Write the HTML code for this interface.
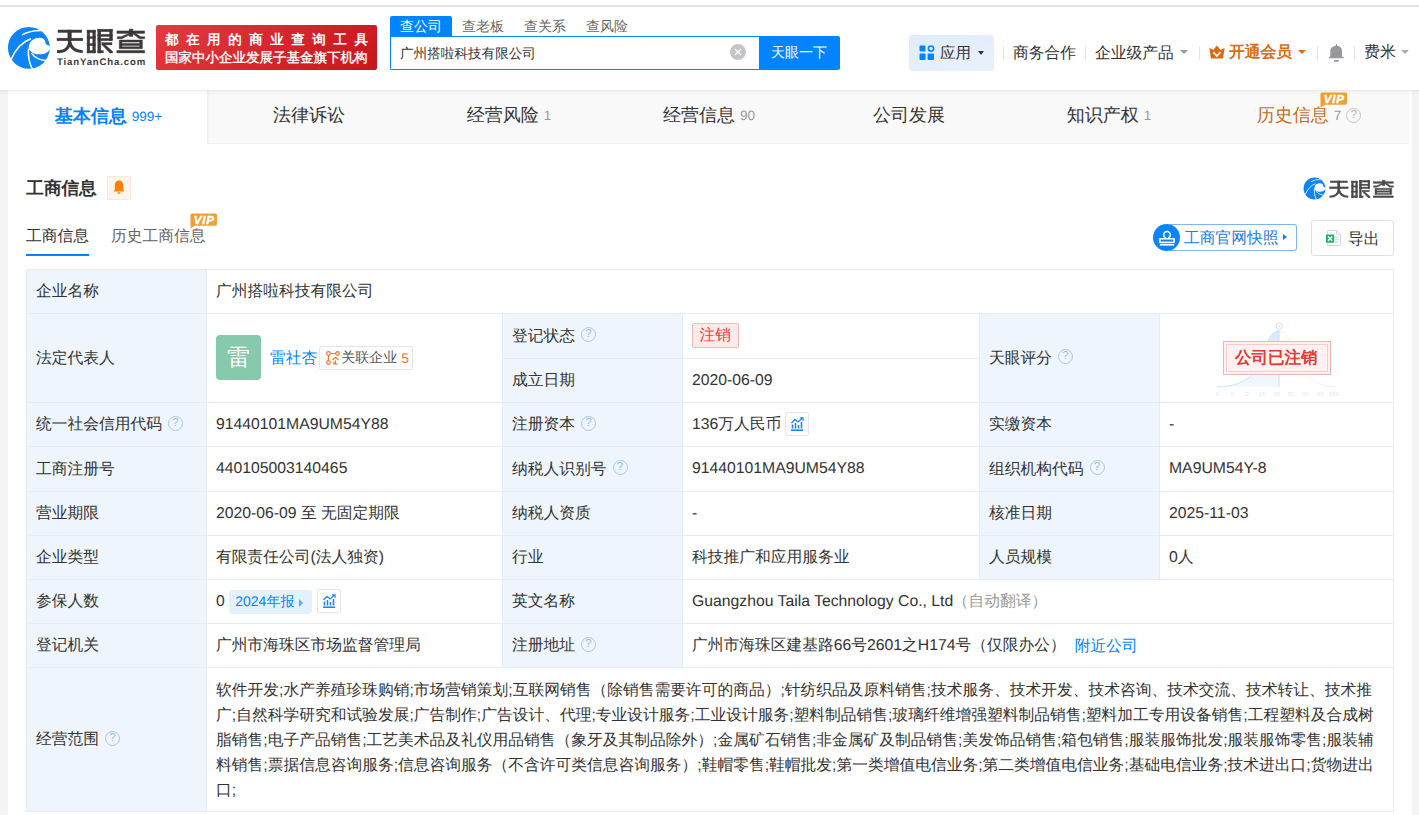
<!DOCTYPE html>
<html><head><meta charset="utf-8">
<style>
*{box-sizing:border-box;margin:0;padding:0}
html,body{width:1419px;height:815px;overflow:hidden}
body{text-rendering:geometricPrecision;background:#f4f4f4;font-family:"Liberation Sans",sans-serif;color:#333;position:relative}
.abs{position:absolute}
#topline{left:0;top:0;width:1419px;height:5px;background:#fff}
#topline2{left:0;top:5px;width:1419px;height:2px;background:#e2e2e2}
#header{left:0;top:7px;width:1419px;height:83px;background:#fff}
.nowrap{white-space:nowrap}
/* card */
#card{left:8px;top:90px;width:1404px;height:725px;background:#fff}
#tabbar{left:8px;top:90px;width:1401px;height:54px;background:#f9f9f9;border-bottom:1px solid #f1f1f1}
.tab{position:absolute;top:0;height:53px;width:200px;display:flex;justify-content:center;align-items:center;padding-bottom:1px;padding-left:2px;font-size:18px;color:#333;white-space:nowrap}
.tab .n{font-size:13.5px;color:#999;margin-left:5px;margin-bottom:1px}
#tab0{left:0;background:#fff;color:#0084ff;font-weight:bold;height:54px;width:199px}
#tab0 .n{color:#0084ff;font-weight:normal}
/* table */
.cell{position:absolute;font-weight:500;font-size:15.75px;white-space:nowrap;display:flex;align-items:center;padding-left:9px;color:#333}
.lab{background:#eef5fc}
.hl{position:absolute;height:1px;background:#e5ecf4}
.vl{position:absolute;width:1px;background:#e5ecf4}
.q{display:inline-block;width:15px;height:15px;border:1.2px solid #abc7e6;border-radius:50%;color:#9dbbe0;font-size:11.5px;font-weight:normal;line-height:13px;text-align:center;margin-left:6px;position:relative;top:-1.5px;font-family:"Liberation Sans",sans-serif}
.avatar{margin-left:-1px;position:relative;top:-1px;display:inline-block;width:45px;height:45px;border-radius:4px;background:#86c9ac;color:#fff;font-size:23px;line-height:44px;text-align:center;flex:none}
.rel{display:inline-flex;align-items:center;height:24px;border:1px solid #e3e6eb;border-radius:2px;padding:0 3px 0 6px;margin-left:2px;font-size:14px;color:#555}
.tagred{position:relative;top:-1px;display:inline-block;height:25px;line-height:23px;padding:0 6.5px;border:1px solid #f6b9b9;background:#feeaea;color:#e8413a;border-radius:2px;font-size:15.75px}
.chartbtn{position:relative;top:-1px;display:inline-flex;align-items:center;justify-content:center;width:24px;height:24px;border:1px solid #e3e8ef;border-radius:2px;margin-left:4px}
.nb{display:inline-flex;align-items:center;height:24px;padding:2px 8.5px 0 6.5px;background:#e3f1fd;color:#0084ff;border-radius:3px;font-size:14px;margin-left:4px}
.tri{display:inline-block;width:0;height:0;border-top:4px solid transparent;border-bottom:4px solid transparent;border-left:4px solid #5aaaf5;margin-left:5px}
.scope{font-weight:500;width:1185px;padding:10.3px 10px 0 9px;font-size:15.75px;line-height:25px;color:#333}
.sl{white-space:nowrap}
</style></head>
<body>
<div class="abs" id="topline"></div>
<div class="abs" id="topline2"></div>
<div class="abs" id="header"></div>

<!-- logo -->
<svg class="abs" style="left:5px;top:24px" width="50" height="48" viewBox="0 0 849 815">
  <circle cx="405" cy="405" r="355" fill="#0f84f5"/>
  <path d="M400 420 C400 300 480 238 580 235 C650 235 690 270 690 340 L780 385 C750 480 680 520 560 515 C480 510 440 470 400 420 Z" fill="#fff"/>
  <path d="M290 185 Q420 110 610 110" stroke="#fff" stroke-width="24" fill="none"/>
  <path d="M105 600 Q220 330 440 250" stroke="#fff" stroke-width="26" fill="none"/>
  <path d="M398 420 Q385 620 470 780" stroke="#fff" stroke-width="26" fill="none"/>
  <path d="M450 495 Q530 610 700 622" stroke="#fff" stroke-width="26" fill="none"/>
</svg>
<svg class="abs" style="left:55px;top:26px" width="95" height="30" viewBox="0 0 1419 448">
<g fill="#3d3839" stroke="#3d3839" stroke-width="7">
 <rect x="45" y="60" width="355" height="36"/>
 <rect x="30" y="182" width="385" height="38"/>
 <rect x="192" y="60" width="52" height="165"/>
 <path d="M218 215 C218 330 160 383 30 383" stroke="#3d3839" stroke-width="44" fill="none"/>
 <path d="M222 240 C240 330 300 383 415 383" stroke="#3d3839" stroke-width="44" fill="none"/>
 <rect x="480" y="62" width="38" height="340"/>
 <rect x="565" y="62" width="38" height="340"/>
 <rect x="480" y="62" width="123" height="34"/>
 <rect x="480" y="160" width="123" height="26"/>
 <rect x="480" y="265" width="123" height="28"/>
 <rect x="480" y="366" width="123" height="36"/>
 <rect x="640" y="48" width="44" height="354"/>
 <rect x="640" y="48" width="215" height="36"/>
 <rect x="818" y="48" width="37" height="170"/>
 <rect x="640" y="125" width="215" height="30"/>
 <rect x="640" y="186" width="215" height="32"/>
 <rect x="700" y="250" width="150" height="32"/>
 <path d="M705 282 L750 282 L862 380 L862 402 L820 402 Z"/>
 <rect x="640" y="368" width="80" height="34"/>
 <rect x="925" y="74" width="415" height="36"/>
 <rect x="1108" y="46" width="56" height="110"/>
 <path d="M1120 105 L1165 105 L1000 190 L930 190 L930 160 L990 160 Z"/>
 <path d="M1150 105 L1195 105 L1280 160 L1340 160 L1340 190 L1260 190 Z"/>
 <path fill-rule="evenodd" d="M960 210 L1305 210 L1305 340 L960 340 Z M1000 240 L1265 240 L1265 262 L1000 262 Z M1000 290 L1265 290 L1265 310 L1000 310 Z"/>
 <rect x="925" y="366" width="415" height="36"/>
</g></svg>
<div class="abs nowrap" style="left:57px;top:57px;font-size:9.6px;font-weight:bold;color:#3d3839;letter-spacing:0.85px;line-height:12px">TianYanCha.com</div>

<!-- red badge -->
<div class="abs" style="left:156px;top:25px;width:221px;height:45px;border-radius:2px;background:linear-gradient(135deg,#e23b40,#c8151c)"></div>
<div class="abs nowrap" style="left:165px;top:31px;font-size:13.5px;font-weight:bold;color:#fff;letter-spacing:7.55px;line-height:18px">都在用的商业查询工具</div>
<div class="abs nowrap" style="left:165px;top:49px;font-size:13.5px;-webkit-text-stroke:0.35px #fff;color:#fff;line-height:18px">国家中小企业发展子基金旗下机构</div>

<!-- search -->
<div class="abs" style="left:390px;top:16px;width:62px;height:21px;background:#0084ff;border-radius:2px 2px 0 0"></div>
<div class="abs nowrap" style="left:400px;top:15.5px;font-size:14px;font-weight:500;color:#fff;line-height:20px">查公司</div>
<div class="abs nowrap" style="left:462px;top:15.5px;font-size:14px;color:#666;line-height:20px">查老板</div>
<div class="abs nowrap" style="left:524px;top:15.5px;font-size:14px;color:#666;line-height:20px">查关系</div>
<div class="abs nowrap" style="left:586px;top:15.5px;font-size:14px;color:#666;line-height:20px">查风险</div>
<div class="abs" style="left:390px;top:36px;width:370px;height:34px;border:1px solid #0084ff;border-right:none;border-radius:0 0 0 2px;background:#fff"></div>
<div class="abs nowrap" style="left:400px;top:44px;font-size:13.6px;color:#333;line-height:20px">广州搭啦科技有限公司</div>
<div class="abs" style="left:730px;top:44px;width:16px;height:16px;border-radius:50%;background:#c3c4c9"></div>
<svg class="abs" style="left:730px;top:44px" width="16" height="16" viewBox="0 0 16 16"><path d="M5 5 L11 11 M11 5 L5 11" stroke="#fff" stroke-width="1.3"/></svg>
<div class="abs" style="left:759px;top:36px;width:81px;height:34px;background:#0084ff;border-radius:0 2px 2px 0"></div>
<div class="abs nowrap" style="left:771px;top:41px;font-size:14px;color:#fff;line-height:22px">天眼一下</div>

<!-- right nav -->
<div class="abs" style="left:909px;top:35px;width:85px;height:36px;border-radius:3px;background:linear-gradient(160deg,#e0ecfb,#e9f1fc)"></div>
<svg class="abs" style="left:919px;top:45px" width="16" height="16" viewBox="0 0 16 16">
  <rect x="0.5" y="0.5" width="6" height="6" rx="1" fill="#0084ff"/>
  <circle cx="12" cy="3.6" r="2.6" fill="none" stroke="#0084ff" stroke-width="1.6"/>
  <rect x="0.5" y="8.5" width="6" height="6.5" rx="1" fill="#0084ff"/>
  <rect x="8.6" y="8.5" width="6.4" height="6.5" rx="1" fill="#0084ff"/>
</svg>
<div class="abs nowrap" style="left:940px;top:43px;font-size:15.5px;color:#333;line-height:22px">应用</div>
<div class="abs" style="left:978px;top:51px;width:0;height:0;border-left:3.5px solid transparent;border-right:3.5px solid transparent;border-top:4px solid #333"></div>
<div class="abs" style="left:1003px;top:46px;width:1px;height:14px;background:#e5e5e5"></div>
<div class="abs nowrap" style="left:1013px;top:43px;font-size:15.75px;color:#333;line-height:22px">商务合作</div>
<div class="abs" style="left:1085px;top:46px;width:1px;height:14px;background:#e5e5e5"></div>
<div class="abs nowrap" style="left:1095px;top:43px;font-size:15.75px;color:#333;line-height:22px">企业级产品</div>
<div class="abs" style="left:1180px;top:50px;width:0;height:0;border-left:4px solid transparent;border-right:4px solid transparent;border-top:4px solid #999"></div>
<div class="abs" style="left:1199px;top:46px;width:1px;height:14px;background:#e5e5e5"></div>
<svg class="abs" style="left:1204px;top:40px" width="26" height="24" viewBox="0 0 883 815">
  <path d="M180 270 L320 335 L435 190 L560 335 L700 270 L645 630 L235 630 Z" fill="#dc6a12"/>
  <path d="M315 410 L435 545 L560 410" stroke="#fff" stroke-width="58" fill="none"/>
</svg>
<div class="abs nowrap" style="left:1229px;top:42px;font-size:15.75px;font-weight:bold;color:#d96d18;line-height:22px">开通会员</div>
<div class="abs" style="left:1298px;top:50px;width:0;height:0;border-left:4px solid transparent;border-right:4px solid transparent;border-top:4px solid #d96d18"></div>
<div class="abs" style="left:1317px;top:46px;width:1px;height:14px;background:#e5e5e5"></div>
<svg class="abs" style="left:1324px;top:40px" width="26" height="24" viewBox="0 0 883 815">
  <path d="M215 590 L215 360 C215 260 300 200 420 200 C540 200 610 260 610 360 L610 590 Z" fill="#96989d"/>
  <rect x="170" y="565" width="500" height="55" rx="8" fill="#96989d"/>
  <rect x="398" y="140" width="44" height="80" rx="10" fill="#96989d"/>
  <rect x="340" y="680" width="160" height="60" rx="10" fill="#96989d"/>
</svg>
<div class="abs" style="left:1354px;top:46px;width:1px;height:14px;background:#e5e5e5"></div>
<div class="abs nowrap" style="left:1364px;top:42px;font-size:16px;color:#333;line-height:22px">费米</div>
<div class="abs" style="left:1401px;top:50px;width:0;height:0;border-left:4px solid transparent;border-right:4px solid transparent;border-top:4px solid #aaa"></div>

<!-- card -->
<div class="abs" id="card"></div>
<div class="abs" id="tabbar">
  <div class="tab" id="tab0">基本信息<span class="n">999+</span></div>
  <div class="abs" style="left:199px;top:0;width:3px;height:53px;background:linear-gradient(90deg,rgba(0,0,0,.045),rgba(0,0,0,0))"></div>
  <div class="tab" style="left:200px">法律诉讼</div>
  <div class="tab" style="left:400px">经营风险<span class="n">1</span></div>
  <div class="tab" style="left:600px">经营信息<span class="n">90</span></div>
  <div class="tab" style="left:800px">公司发展</div>
  <div class="tab" style="left:1000px">知识产权<span class="n">1</span></div>
  <div class="tab" style="left:1200px;color:#c66c22">历史信息<span class="n">7</span><span class="q" style="margin-left:5px;margin-top:1px;border-color:#c5c5c5;color:#b5b5b5">?</span></div>
</div>

<div class="abs" style="left:0;top:90px;width:1419px;height:5px;background:linear-gradient(rgba(0,0,0,.065),rgba(0,0,0,.02) 50%,rgba(0,0,0,0))"></div>
<!-- section title -->
<div class="abs nowrap" style="left:26.3px;top:175.6px;font-size:17.6px;font-weight:bold;color:#333;line-height:24px">工商信息</div>
<div class="abs" style="left:107px;top:176px;width:24px;height:24px;border:1px solid #fbe9da;background:#fff5ec;border-radius:2px"></div>
<svg class="abs" style="left:113px;top:180px" width="12" height="14" viewBox="0 0 12 14"><path d="M6 0.6 C9 0.6 10.2 3 10.2 6 L10.2 10 L11.6 11.6 L0.4 11.6 L1.8 10 L1.8 6 C1.8 3 3 0.6 6 0.6 Z" fill="#ff7f00"/><path d="M4.4 12.2 H7.6 C7.6 13.3 6.9 13.8 6 13.8 C5.1 13.8 4.4 13.3 4.4 12.2 Z" fill="#ff7f00"/></svg>

<div class="abs nowrap" style="left:26px;top:225.5px;font-size:15.75px;color:#333;line-height:22px">工商信息</div>
<div class="abs" style="left:26px;top:254px;width:63px;height:2px;background:#0084ff"></div>
<div class="abs nowrap" style="left:111px;top:225.5px;font-size:15.75px;color:#666;line-height:22px">历史工商信息</div>
<svg class="abs" style="left:190px;top:213px" width="28" height="16" viewBox="0 0 28 16"><defs><linearGradient id="vg190" x1="0" y1="0" x2="1" y2="1"><stop offset="0" stop-color="#f59b1f"/><stop offset="1" stop-color="#e9a547"/></linearGradient></defs><path d="M2 0.5 H25.5 Q27 0.5 27 2 V11 Q27 12.8 25.5 12.8 H5 L0.5 15.5 V2 Q0.5 0.5 2 0.5 Z" fill="url(#vg190)"/><text x="14.3" y="10.8" text-anchor="middle" font-family="Liberation Sans" font-weight="bold" font-style="italic" font-size="11.5" letter-spacing="0.9" stroke="#fff" stroke-width="0.45" fill="#fff">VIP</text></svg>

<!-- tabvip -->
<svg class="abs" style="left:1320px;top:92px" width="28" height="16" viewBox="0 0 28 16"><defs><linearGradient id="vg1320" x1="0" y1="0" x2="1" y2="1"><stop offset="0" stop-color="#f59b1f"/><stop offset="1" stop-color="#e9a547"/></linearGradient></defs><path d="M2 0.5 H25.5 Q27 0.5 27 2 V11 Q27 12.8 25.5 12.8 H5 L0.5 15.5 V2 Q0.5 0.5 2 0.5 Z" fill="url(#vg1320)"/><text x="14.3" y="10.8" text-anchor="middle" font-family="Liberation Sans" font-weight="bold" font-style="italic" font-size="11.5" letter-spacing="0.9" stroke="#fff" stroke-width="0.45" fill="#fff">VIP</text></svg>
<!-- right logo -->
<svg class="abs" style="left:1302.4px;top:175.8px" width="26.2" height="25.1" viewBox="0 0 849 815">
  <circle cx="405" cy="405" r="355" fill="#0f84f5"/>
  <path d="M400 420 C400 300 480 238 580 235 C650 235 690 270 690 340 L780 385 C750 480 680 520 560 515 C480 510 440 470 400 420 Z" fill="#fff"/>
  <path d="M290 185 Q420 110 610 110" stroke="#fff" stroke-width="24" fill="none"/>
  <path d="M105 600 Q220 330 440 250" stroke="#fff" stroke-width="26" fill="none"/>
  <path d="M398 420 Q385 620 470 780" stroke="#fff" stroke-width="26" fill="none"/>
  <path d="M450 495 Q530 610 700 622" stroke="#fff" stroke-width="26" fill="none"/>
</svg>
<svg class="abs" style="left:1328px;top:178px" width="69.4" height="21.9" viewBox="0 0 1419 448">
<g fill="#4b4b4e" stroke="#4b4b4e" stroke-width="7">
 <rect x="45" y="60" width="355" height="36"/>
 <rect x="30" y="182" width="385" height="38"/>
 <rect x="192" y="60" width="52" height="165"/>
 <path d="M218 215 C218 330 160 383 30 383" stroke="#4b4b4e" stroke-width="44" fill="none"/>
 <path d="M222 240 C240 330 300 383 415 383" stroke="#4b4b4e" stroke-width="44" fill="none"/>
 <rect x="480" y="62" width="38" height="340"/>
 <rect x="565" y="62" width="38" height="340"/>
 <rect x="480" y="62" width="123" height="34"/>
 <rect x="480" y="160" width="123" height="26"/>
 <rect x="480" y="265" width="123" height="28"/>
 <rect x="480" y="366" width="123" height="36"/>
 <rect x="640" y="48" width="44" height="354"/>
 <rect x="640" y="48" width="215" height="36"/>
 <rect x="818" y="48" width="37" height="170"/>
 <rect x="640" y="125" width="215" height="30"/>
 <rect x="640" y="186" width="215" height="32"/>
 <rect x="700" y="250" width="150" height="32"/>
 <path d="M705 282 L750 282 L862 380 L862 402 L820 402 Z"/>
 <rect x="640" y="368" width="80" height="34"/>
 <rect x="925" y="74" width="415" height="36"/>
 <rect x="1108" y="46" width="56" height="110"/>
 <path d="M1120 105 L1165 105 L1000 190 L930 190 L930 160 L990 160 Z"/>
 <path d="M1150 105 L1195 105 L1280 160 L1340 160 L1340 190 L1260 190 Z"/>
 <path fill-rule="evenodd" d="M960 210 L1305 210 L1305 340 L960 340 Z M1000 240 L1265 240 L1265 262 L1000 262 Z M1000 290 L1265 290 L1265 310 L1000 310 Z"/>
 <rect x="925" y="366" width="415" height="36"/>
</g></svg>
<!-- snapshot btn -->
<div class="abs" style="left:1170px;top:224px;width:127px;height:27px;border:1px solid #7db6f0;border-left:none;border-radius:0 3px 3px 0;background:#fff"></div>
<div class="abs" style="left:1153px;top:224px;width:27px;height:27px;border-radius:50%;background:#0a84ff"></div>
<svg class="abs" style="left:1158.7px;top:229.8px" width="16" height="16" viewBox="0 0 16 16"><path d="M6.2 8.8 V7.6 C5.3 7 4.7 6 4.7 5 C4.7 3.1 6.2 1.5 8 1.5 C9.8 1.5 11.3 3.1 11.3 5 C11.3 6 10.7 7 9.8 7.6 V8.8" fill="none" stroke="#fff" stroke-width="1.5"/><rect x="0.9" y="8.8" width="14.2" height="3.5" fill="none" stroke="#fff" stroke-width="1.5"/><rect x="0.9" y="13.8" width="14.2" height="1.8" fill="#fff"/></svg>
<div class="abs nowrap" style="left:1184px;top:227.5px;font-size:15.75px;color:#1a7de5;line-height:22px">工商官网快照</div>
<div class="abs" style="left:1283px;top:234px;width:0;height:0;border-top:3.5px solid transparent;border-bottom:3.5px solid transparent;border-left:4px solid #1a7de5"></div>
<!-- export btn -->
<div class="abs" style="left:1311px;top:220px;width:83px;height:36px;border:1px solid #dcdfe6;border-radius:3px;background:#fff"></div>
<svg class="abs" style="left:1325px;top:229px" width="17" height="18" viewBox="0 0 17 18"><path d="M2.5 1.5 H11.5 L15.5 5.5 V16.5 H2.5 Z" fill="#fff" stroke="#d5d8de" stroke-width="1"/><path d="M11.5 1.5 V5.5 H15.5" fill="none" stroke="#d5d8de" stroke-width="1"/><rect x="10" y="7.5" width="3.5" height="1.2" fill="#d5d8de"/><rect x="10" y="10" width="3.5" height="1.2" fill="#d5d8de"/><rect x="10" y="12.5" width="3.5" height="1.2" fill="#d5d8de"/><rect x="1" y="5.5" width="8.2" height="8.2" rx="0.6" fill="#22b36b"/><path d="M3 7.5 L7.2 11.7 M7.2 7.5 L3 11.7" stroke="#fff" stroke-width="1.4"/></svg>
<div class="abs nowrap" style="left:1348px;top:229px;font-size:15.75px;color:#333;line-height:22px">导出</div>
<!-- score -->
<svg class="abs" style="left:1210px;top:318px" width="135" height="82" viewBox="0 0 135 82">
  <defs><linearGradient id="sg" x1="0" y1="0" x2="0" y2="1"><stop offset="0" stop-color="#d8e9fb"/><stop offset="1" stop-color="#f3f8fe"/></linearGradient></defs>
  <path d="M7 69 C32 68 42 60 50 45 C56 32 58 13 69 13 L69 69 Z" fill="url(#sg)"/>
  <path d="M7 69 C32 68 42 60 50 45 C56 32 58 13 69 13" fill="none" stroke="#cfe2f7" stroke-width="1"/>
  <path d="M69 13 C80 13 82 32 88 45 C96 60 106 68 126 69" fill="none" stroke="#eef3f9" stroke-width="1"/>
  <line x1="69" y1="12" x2="69" y2="69" stroke="#cfe2f7" stroke-width="1.2"/>
  <circle cx="69.3" cy="8.1" r="3.2" fill="#fff" stroke="#cfe2f7" stroke-width="1"/>
  <circle cx="69.3" cy="8.1" r="0.9" fill="#cfe2f7"/>
  <g font-family="Liberation Sans" font-size="6" fill="#dde9f6" text-anchor="middle"><text x="7.5" y="78">0</text><text x="22" y="78">1</text><text x="37" y="78">3</text><text x="51.5" y="78">15</text><text x="66.5" y="78">50</text><text x="81" y="78">85</text><text x="96" y="78">97</text><text x="110" y="78">99</text><text x="124" y="78">100</text></g>
</svg>
<div class="abs" style="left:1223px;top:341px;width:108px;height:34px;border:1px solid #efb4b2;background:#fdf2f1"></div>
<div class="abs" style="left:1226px;top:344px;width:102px;height:28px;border:1px solid #f5cdcc"></div>
<div class="abs nowrap" style="left:1235px;top:346px;font-size:16.5px;font-weight:bold;color:#e33b35;line-height:24px">公司已注销</div>
<!-- table -->
<!--TABLE-->
<div class="abs" style="left:26px;top:269px;width:180px;height:44px;background:#eef5fc"></div>
<div class="abs" style="left:26px;top:313px;width:180px;height:89px;background:#eef5fc"></div>
<div class="abs" style="left:26px;top:402px;width:180px;height:44px;background:#eef5fc"></div>
<div class="abs" style="left:26px;top:446px;width:180px;height:45px;background:#eef5fc"></div>
<div class="abs" style="left:26px;top:491px;width:180px;height:44px;background:#eef5fc"></div>
<div class="abs" style="left:26px;top:535px;width:180px;height:44px;background:#eef5fc"></div>
<div class="abs" style="left:26px;top:579px;width:180px;height:44px;background:#eef5fc"></div>
<div class="abs" style="left:26px;top:623px;width:180px;height:44px;background:#eef5fc"></div>
<div class="abs" style="left:26px;top:667px;width:180px;height:144px;background:#eef5fc"></div>
<div class="abs" style="left:502px;top:313px;width:180px;height:89px;background:#eef5fc"></div>
<div class="abs" style="left:502px;top:402px;width:180px;height:44px;background:#eef5fc"></div>
<div class="abs" style="left:502px;top:446px;width:180px;height:45px;background:#eef5fc"></div>
<div class="abs" style="left:502px;top:491px;width:180px;height:44px;background:#eef5fc"></div>
<div class="abs" style="left:502px;top:535px;width:180px;height:44px;background:#eef5fc"></div>
<div class="abs" style="left:502px;top:579px;width:180px;height:44px;background:#eef5fc"></div>
<div class="abs" style="left:502px;top:623px;width:180px;height:44px;background:#eef5fc"></div>
<div class="abs" style="left:979px;top:313px;width:180px;height:89px;background:#eef5fc"></div>
<div class="abs" style="left:979px;top:402px;width:180px;height:44px;background:#eef5fc"></div>
<div class="abs" style="left:979px;top:446px;width:180px;height:45px;background:#eef5fc"></div>
<div class="abs" style="left:979px;top:491px;width:180px;height:44px;background:#eef5fc"></div>
<div class="abs" style="left:979px;top:535px;width:180px;height:44px;background:#eef5fc"></div>
<div class="hl" style="left:26px;top:269px;width:1368px"></div>
<div class="hl" style="left:26px;top:313px;width:1368px"></div>
<div class="hl" style="left:26px;top:402px;width:1368px"></div>
<div class="hl" style="left:26px;top:446px;width:1368px"></div>
<div class="hl" style="left:26px;top:491px;width:1368px"></div>
<div class="hl" style="left:26px;top:535px;width:1368px"></div>
<div class="hl" style="left:26px;top:579px;width:1368px"></div>
<div class="hl" style="left:26px;top:623px;width:1368px"></div>
<div class="hl" style="left:26px;top:667px;width:1368px"></div>
<div class="hl" style="left:26px;top:811px;width:1368px"></div>
<div class="hl" style="left:502px;top:358px;width:478px"></div>
<div class="vl" style="left:26px;top:269px;height:543px"></div>
<div class="vl" style="left:1393px;top:269px;height:543px"></div>
<div class="vl" style="left:206px;top:269px;height:543px"></div>
<div class="vl" style="left:502px;top:313px;height:355px"></div>
<div class="vl" style="left:682px;top:313px;height:355px"></div>
<div class="vl" style="left:979px;top:313px;height:267px"></div>
<div class="vl" style="left:1159px;top:313px;height:267px"></div>
<div class="cell" style="left:27px;top:270px;width:179px;height:43px;">企业名称</div>
<div class="cell" style="left:207px;top:270px;width:1186px;height:43px;">广州搭啦科技有限公司</div>
<div class="cell" style="left:27px;top:314px;width:179px;height:88px;">法定代表人</div>
<div class="cell" style="left:207px;top:314px;width:295px;height:88px;padding-left:10px"><span class="avatar">雷</span><span style="color:#0084ff;margin-left:9px">雷社杏</span><span class="rel"><svg width="14" height="14" viewBox="0 0 14 14" style="margin-right:1px"><circle cx="2.5" cy="2.5" r="1.8" fill="none" stroke="#f07a2a" stroke-width="1.2"/><circle cx="11.5" cy="2.5" r="1.8" fill="none" stroke="#f07a2a" stroke-width="1.2"/><circle cx="2.5" cy="11.5" r="1.8" fill="none" stroke="#f07a2a" stroke-width="1.2"/><path d="M4.3 2.5 H9.7 M2.5 4.3 V9.7" stroke="#f07a2a" stroke-width="1.2"/><path d="M6.5 9 L9.5 6.5 L12.5 9 M7 13 H12 M9.5 9.5 V13 M8 10.5 V13" stroke="#f07a2a" stroke-width="1.1" fill="none"/></svg>关联企业<span style="color:#f07a2a;margin-left:4px">5</span></span></div>
<div class="cell" style="left:503px;top:314px;width:179px;height:44px;">登记状态<span class="q">?</span></div>
<div class="cell" style="left:503px;top:359px;width:179px;height:43px;">成立日期</div>
<div class="cell" style="left:683px;top:314px;width:296px;height:44px;"><span class="tagred">注销</span></div>
<div class="cell" style="left:683px;top:359px;width:296px;height:43px;">2020-06-09</div>
<div class="cell" style="left:980px;top:314px;width:179px;height:88px;">天眼评分<span class="q">?</span></div>
<div class="cell" style="left:1160px;top:314px;width:233px;height:88px;padding:0"></div>
<div class="cell" style="left:27px;top:403px;width:179px;height:43px;">统一社会信用代码<span class="q">?</span></div>
<div class="cell" style="left:207px;top:403px;width:295px;height:43px;">91440101MA9UM54Y88</div>
<div class="cell" style="left:503px;top:403px;width:179px;height:43px;">注册资本<span class="q">?</span></div>
<div class="cell" style="left:683px;top:403px;width:296px;height:43px;">136万人民币<span class="chartbtn"><svg width="14" height="14" viewBox="0 0 14 14"><path d="M1 13.2 H13" stroke="#1f86ee" stroke-width="1.6"/><path d="M2.5 11.5 V7.5 M5.5 11.5 V6 M8.5 11.5 V8 M11.5 11.5 V5" stroke="#1f86ee" stroke-width="1.6"/><path d="M1.5 6 L5 2.5 L8 5 L12.5 1" stroke="#1f86ee" stroke-width="1.3" fill="none"/><path d="M10 0.8 H13 V3.8" stroke="#1f86ee" stroke-width="1.3" fill="none"/></svg></span></div>
<div class="cell" style="left:980px;top:403px;width:179px;height:43px;">实缴资本</div>
<div class="cell" style="left:1160px;top:403px;width:233px;height:43px;">-</div>
<div class="cell" style="left:27px;top:447px;width:179px;height:44px;">工商注册号</div>
<div class="cell" style="left:207px;top:447px;width:295px;height:44px;">440105003140465</div>
<div class="cell" style="left:503px;top:447px;width:179px;height:44px;">纳税人识别号<span class="q">?</span></div>
<div class="cell" style="left:683px;top:447px;width:296px;height:44px;">91440101MA9UM54Y88</div>
<div class="cell" style="left:980px;top:447px;width:179px;height:44px;">组织机构代码<span class="q">?</span></div>
<div class="cell" style="left:1160px;top:447px;width:233px;height:44px;">MA9UM54Y-8</div>
<div class="cell" style="left:27px;top:492px;width:179px;height:43px;">营业期限</div>
<div class="cell" style="left:207px;top:492px;width:295px;height:43px;">2020-06-09 至 无固定期限</div>
<div class="cell" style="left:503px;top:492px;width:179px;height:43px;">纳税人资质</div>
<div class="cell" style="left:683px;top:492px;width:296px;height:43px;">-</div>
<div class="cell" style="left:980px;top:492px;width:179px;height:43px;">核准日期</div>
<div class="cell" style="left:1160px;top:492px;width:233px;height:43px;">2025-11-03</div>
<div class="cell" style="left:27px;top:536px;width:179px;height:43px;">企业类型</div>
<div class="cell" style="left:207px;top:536px;width:295px;height:43px;">有限责任公司(法人独资)</div>
<div class="cell" style="left:503px;top:536px;width:179px;height:43px;">行业</div>
<div class="cell" style="left:683px;top:536px;width:296px;height:43px;">科技推广和应用服务业</div>
<div class="cell" style="left:980px;top:536px;width:179px;height:43px;">人员规模</div>
<div class="cell" style="left:1160px;top:536px;width:233px;height:43px;">0人</div>
<div class="cell" style="left:27px;top:580px;width:179px;height:43px;">参保人数</div>
<div class="cell" style="left:207px;top:580px;width:295px;height:43px;">0<span class="nb">2024年报<i class="tri"></i></span><span class="chartbtn" style="margin-left:5px"><svg width="14" height="14" viewBox="0 0 14 14"><path d="M1 13.2 H13" stroke="#1f86ee" stroke-width="1.6"/><path d="M2.5 11.5 V7.5 M5.5 11.5 V6 M8.5 11.5 V8 M11.5 11.5 V5" stroke="#1f86ee" stroke-width="1.6"/><path d="M1.5 6 L5 2.5 L8 5 L12.5 1" stroke="#1f86ee" stroke-width="1.3" fill="none"/><path d="M10 0.8 H13 V3.8" stroke="#1f86ee" stroke-width="1.3" fill="none"/></svg></span></div>
<div class="cell" style="left:503px;top:580px;width:179px;height:43px;">英文名称</div>
<div class="cell" style="left:683px;top:580px;width:710px;height:43px;">Guangzhou Taila Technology Co., Ltd<span style="color:#999;margin-left:-0.5px">（自动翻译）</span></div>
<div class="cell" style="left:27px;top:624px;width:179px;height:43px;">登记机关</div>
<div class="cell" style="left:207px;top:624px;width:295px;height:43px;">广州市海珠区市场监督管理局</div>
<div class="cell" style="left:503px;top:624px;width:179px;height:43px;">注册地址<span class="q">?</span></div>
<div class="cell" style="left:683px;top:624px;width:710px;height:43px;">广州市海珠区建基路66号2601之H174号（仅限办公）<span style="color:#0084ff;margin-left:9px;position:relative;top:1px">附近公司</span></div>
<div class="cell" style="left:27px;top:668px;width:179px;height:143px;">经营范围<span class="q">?</span></div>
<div class="scope abs" style="left:207px;top:668px"><div class="sl">软件开发;水产养殖珍珠购销;市场营销策划;互联网销售（除销售需要许可的商品）;针纺织品及原料销售;技术服务、技术开发、技术咨询、技术交流、技术转让、技术推</div><div class="sl">广;自然科学研究和试验发展;广告制作;广告设计、代理;专业设计服务;工业设计服务;塑料制品销售;玻璃纤维增强塑料制品销售;塑料加工专用设备销售;工程塑料及合成树</div><div class="sl">脂销售;电子产品销售;工艺美术品及礼仪用品销售（象牙及其制品除外）;金属矿石销售;非金属矿及制品销售;美发饰品销售;箱包销售;服装服饰批发;服装服饰零售;服装辅</div><div class="sl">料销售;票据信息咨询服务;信息咨询服务（不含许可类信息咨询服务）;鞋帽零售;鞋帽批发;第一类增值电信业务;第二类增值电信业务;基础电信业务;技术进出口;货物进出</div><div class="sl">口;</div></div>
<!--/TABLE-->

</body></html>
